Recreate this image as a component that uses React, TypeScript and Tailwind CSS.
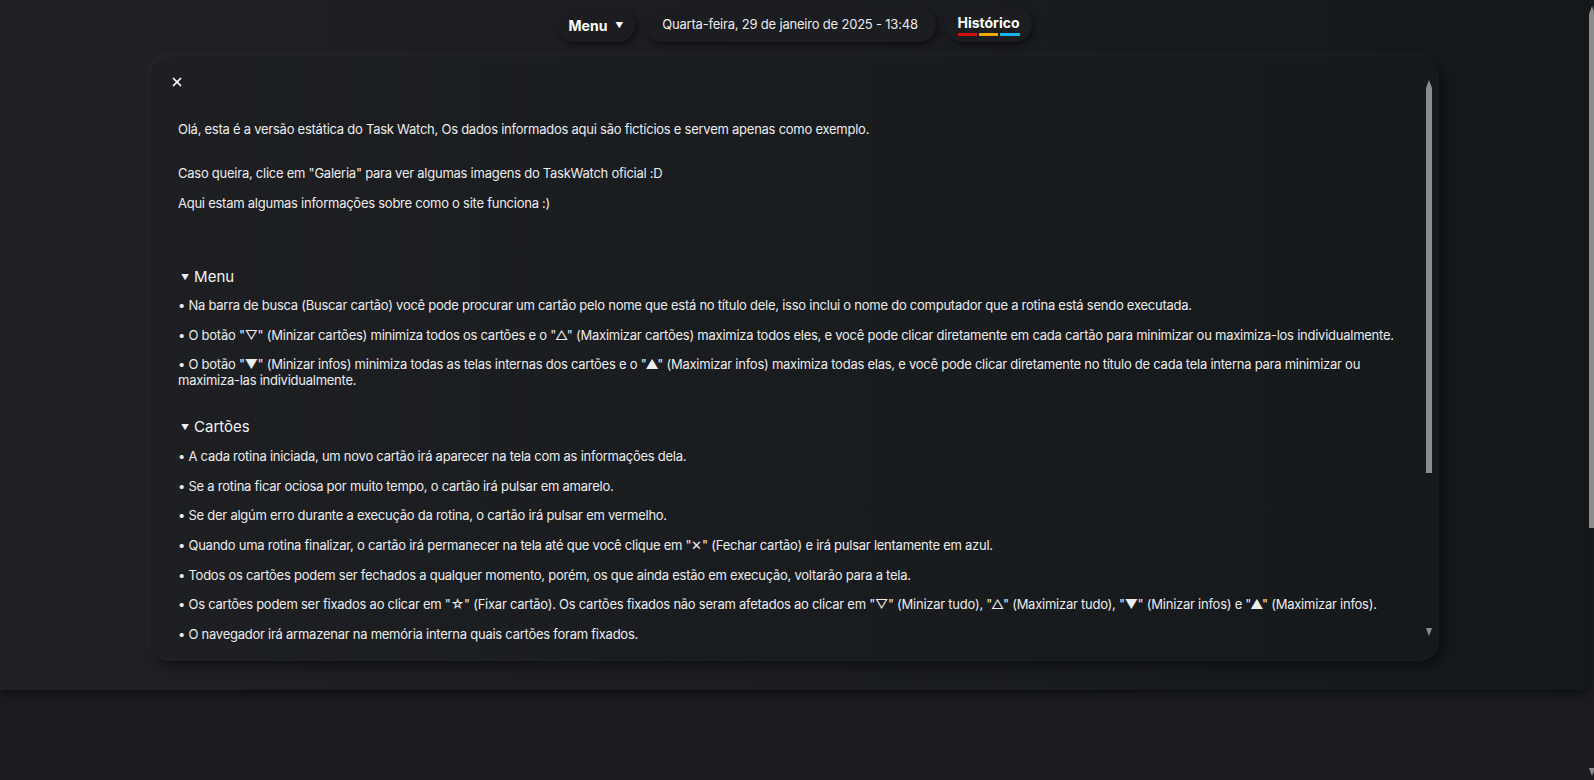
import { X } from "lucide-react";

const menuItems = [
  "• Na barra de busca (Buscar cartão) você pode procurar um cartão pelo nome que está no título dele, isso inclui o nome do computador que a rotina está sendo executada.",
  "• O botão \"▽\" (Minizar cartões) minimiza todos os cartões e o \"△\" (Maximizar cartões) maximiza todos eles, e você pode clicar diretamente em cada cartão para minimizar ou maximiza-los individualmente.",
  "• O botão \"▼\" (Minizar infos) minimiza todas as telas internas dos cartões e o \"▲\" (Maximizar infos) maximiza todas elas, e você pode clicar diretamente no título de cada tela interna para minimizar ou maximiza-las individualmente.",
];

const cardItems = [
  "• A cada rotina iniciada, um novo cartão irá aparecer na tela com as informações dela.",
  "• Se a rotina ficar ociosa por muito tempo, o cartão irá pulsar em amarelo.",
  "• Se der algúm erro durante a execução da rotina, o cartão irá pulsar em vermelho.",
  "• Quando uma rotina finalizar, o cartão irá permanecer na tela até que você clique em \"✕\" (Fechar cartão) e irá pulsar lentamente em azul.",
  "• Todos os cartões podem ser fechados a qualquer momento, porém, os que ainda estão em execução, voltarão para a tela.",
  "• Os cartões podem ser fixados ao clicar em \"☆\" (Fixar cartão). Os cartões fixados não seram afetados ao clicar em \"▽\" (Minizar tudo), \"△\" (Maximizar tudo), \"▼\" (Minizar infos) e \"▲\" (Maximizar infos).",
  "• O navegador irá armazenar na memória interna quais cartões foram fixados.",
];

const Section = ({ title, items, gap }: { title: string; items: string[]; gap: string }) => (
  <div>
    <div className="flex items-center h-[20px] pl-[3px] text-[15px] text-[#f2f2f2]">
      <span className="text-[8px] mr-[5px]">▼</span>
      {title}
    </div>
    <div className={gap}>
      {items.map((t, i) => (
        <p key={i} className="mb-[13.6px] text-[13px] leading-[16px] tracking-[-0.25px] text-[#ececec]">
          {t}
        </p>
      ))}
    </div>
  </div>
);

const Arrow = ({ up }: { up?: boolean }) => (
  <div
    className={
      "w-0 h-0 border-l-[3px] border-r-[3px] border-l-transparent border-r-transparent " +
      (up ? "border-b-[8px] border-b-[#8c8c8c]" : "border-t-[8px] border-t-[#8c8c8c]")
    }
  />
);

const pill =
  "h-[34px] rounded-full bg-[#1b1d21] shadow-[2px_3px_6px_rgba(0,0,0,0.5),-1px_-1px_3px_rgba(255,255,255,0.03)] flex items-center justify-center";

export default function App() {
  return (
    <div className="relative h-[780px] overflow-hidden bg-[#1a1c20] font-['Inter','Noto_Sans',sans-serif]">
      <div className="w-[1589px] h-[690px] bg-gradient-to-r from-[#1f2125] via-[#1b1d21] to-[#15181b] shadow-[0_3px_8px_rgba(0,0,0,0.55)] flex flex-col">
        {/* top bar */}
        <div className="flex justify-center gap-[10px] pt-[8px]">
          <div className={pill + " w-[77px] gap-[8px] text-white"}>
            <span className="text-[14px] font-bold">Menu</span>
            <span className="text-[8px]">▼</span>
          </div>
          <div className={pill + " w-[291px] text-[13px] tracking-[-0.2px] text-[#ececec]"}>
            Quarta-feira, 29 de janeiro de 2025 - 13:48
          </div>
          <div className={pill + " w-[86px] flex-col"}>
            <span className="text-[14px] font-bold text-white leading-[16px] mt-[1px]">Histórico</span>
            <div className="flex gap-[2px] mt-[2px]">
              <div className="w-[19px] h-[3px] bg-[#d40f0f]" />
              <div className="w-[19px] h-[3px] bg-[#f2a900]" />
              <div className="w-[20px] h-[3px] bg-[#13b5ea]" />
            </div>
          </div>
        </div>

        {/* modal */}
        <div className="relative mx-auto mt-[15px] w-[1289px] h-[604px] rounded-[20px] bg-gradient-to-r from-[#1d1f23] to-[#16191c] shadow-[-3px_-3px_8px_rgba(255,255,255,0.035),5px_5px_12px_rgba(0,0,0,0.5)] overflow-hidden">
          <div className="h-full overflow-hidden pl-[28px] pr-[25px]">
            <button className="mt-[18px] -ml-[8px] text-white">
              <X size={14} strokeWidth={3} />
            </button>
            <div className="mt-[26px] text-[13px] leading-[16px] tracking-[-0.25px] text-[#ececec]">
              <p>Olá, esta é a versão estática do Task Watch, Os dados informados aqui são fictícios e servem apenas como exemplo.</p>
              <p className="mt-[28px]">Caso queira, clice em "Galeria" para ver algumas imagens do TaskWatch oficial :D</p>
              <p className="mt-[14px]">Aqui estam algumas informações sobre como o site funciona :)</p>
            </div>
            <div className="mt-[56px]">
              <Section title="Menu" items={menuItems} gap="mt-[10px]" />
            </div>
            <div className="mt-[29px]">
              <Section title="Cartões" items={cardItems} gap="mt-[11px]" />
            </div>
          </div>
          {/* inner scrollbar */}
          <div className="absolute right-[7px] top-[23px] w-[6px] flex flex-col items-center">
            <Arrow up />
            <div className="w-[6px] h-[385px] bg-[#8c8c8c]" />
          </div>
          <div className="absolute right-[7px] top-[571px] w-[6px] flex justify-center">
            <Arrow />
          </div>
        </div>
      </div>

      {/* page scrollbar */}
      <div className="absolute right-0 top-[6px] w-[5px] flex flex-col items-center">
        <Arrow up />
        <div className="w-[5px] h-[514px] bg-[#8c8c8c]" />
      </div>
      <div className="absolute right-0 bottom-[4px] w-[5px] flex justify-center">
        <Arrow />
      </div>
    </div>
  );
}
